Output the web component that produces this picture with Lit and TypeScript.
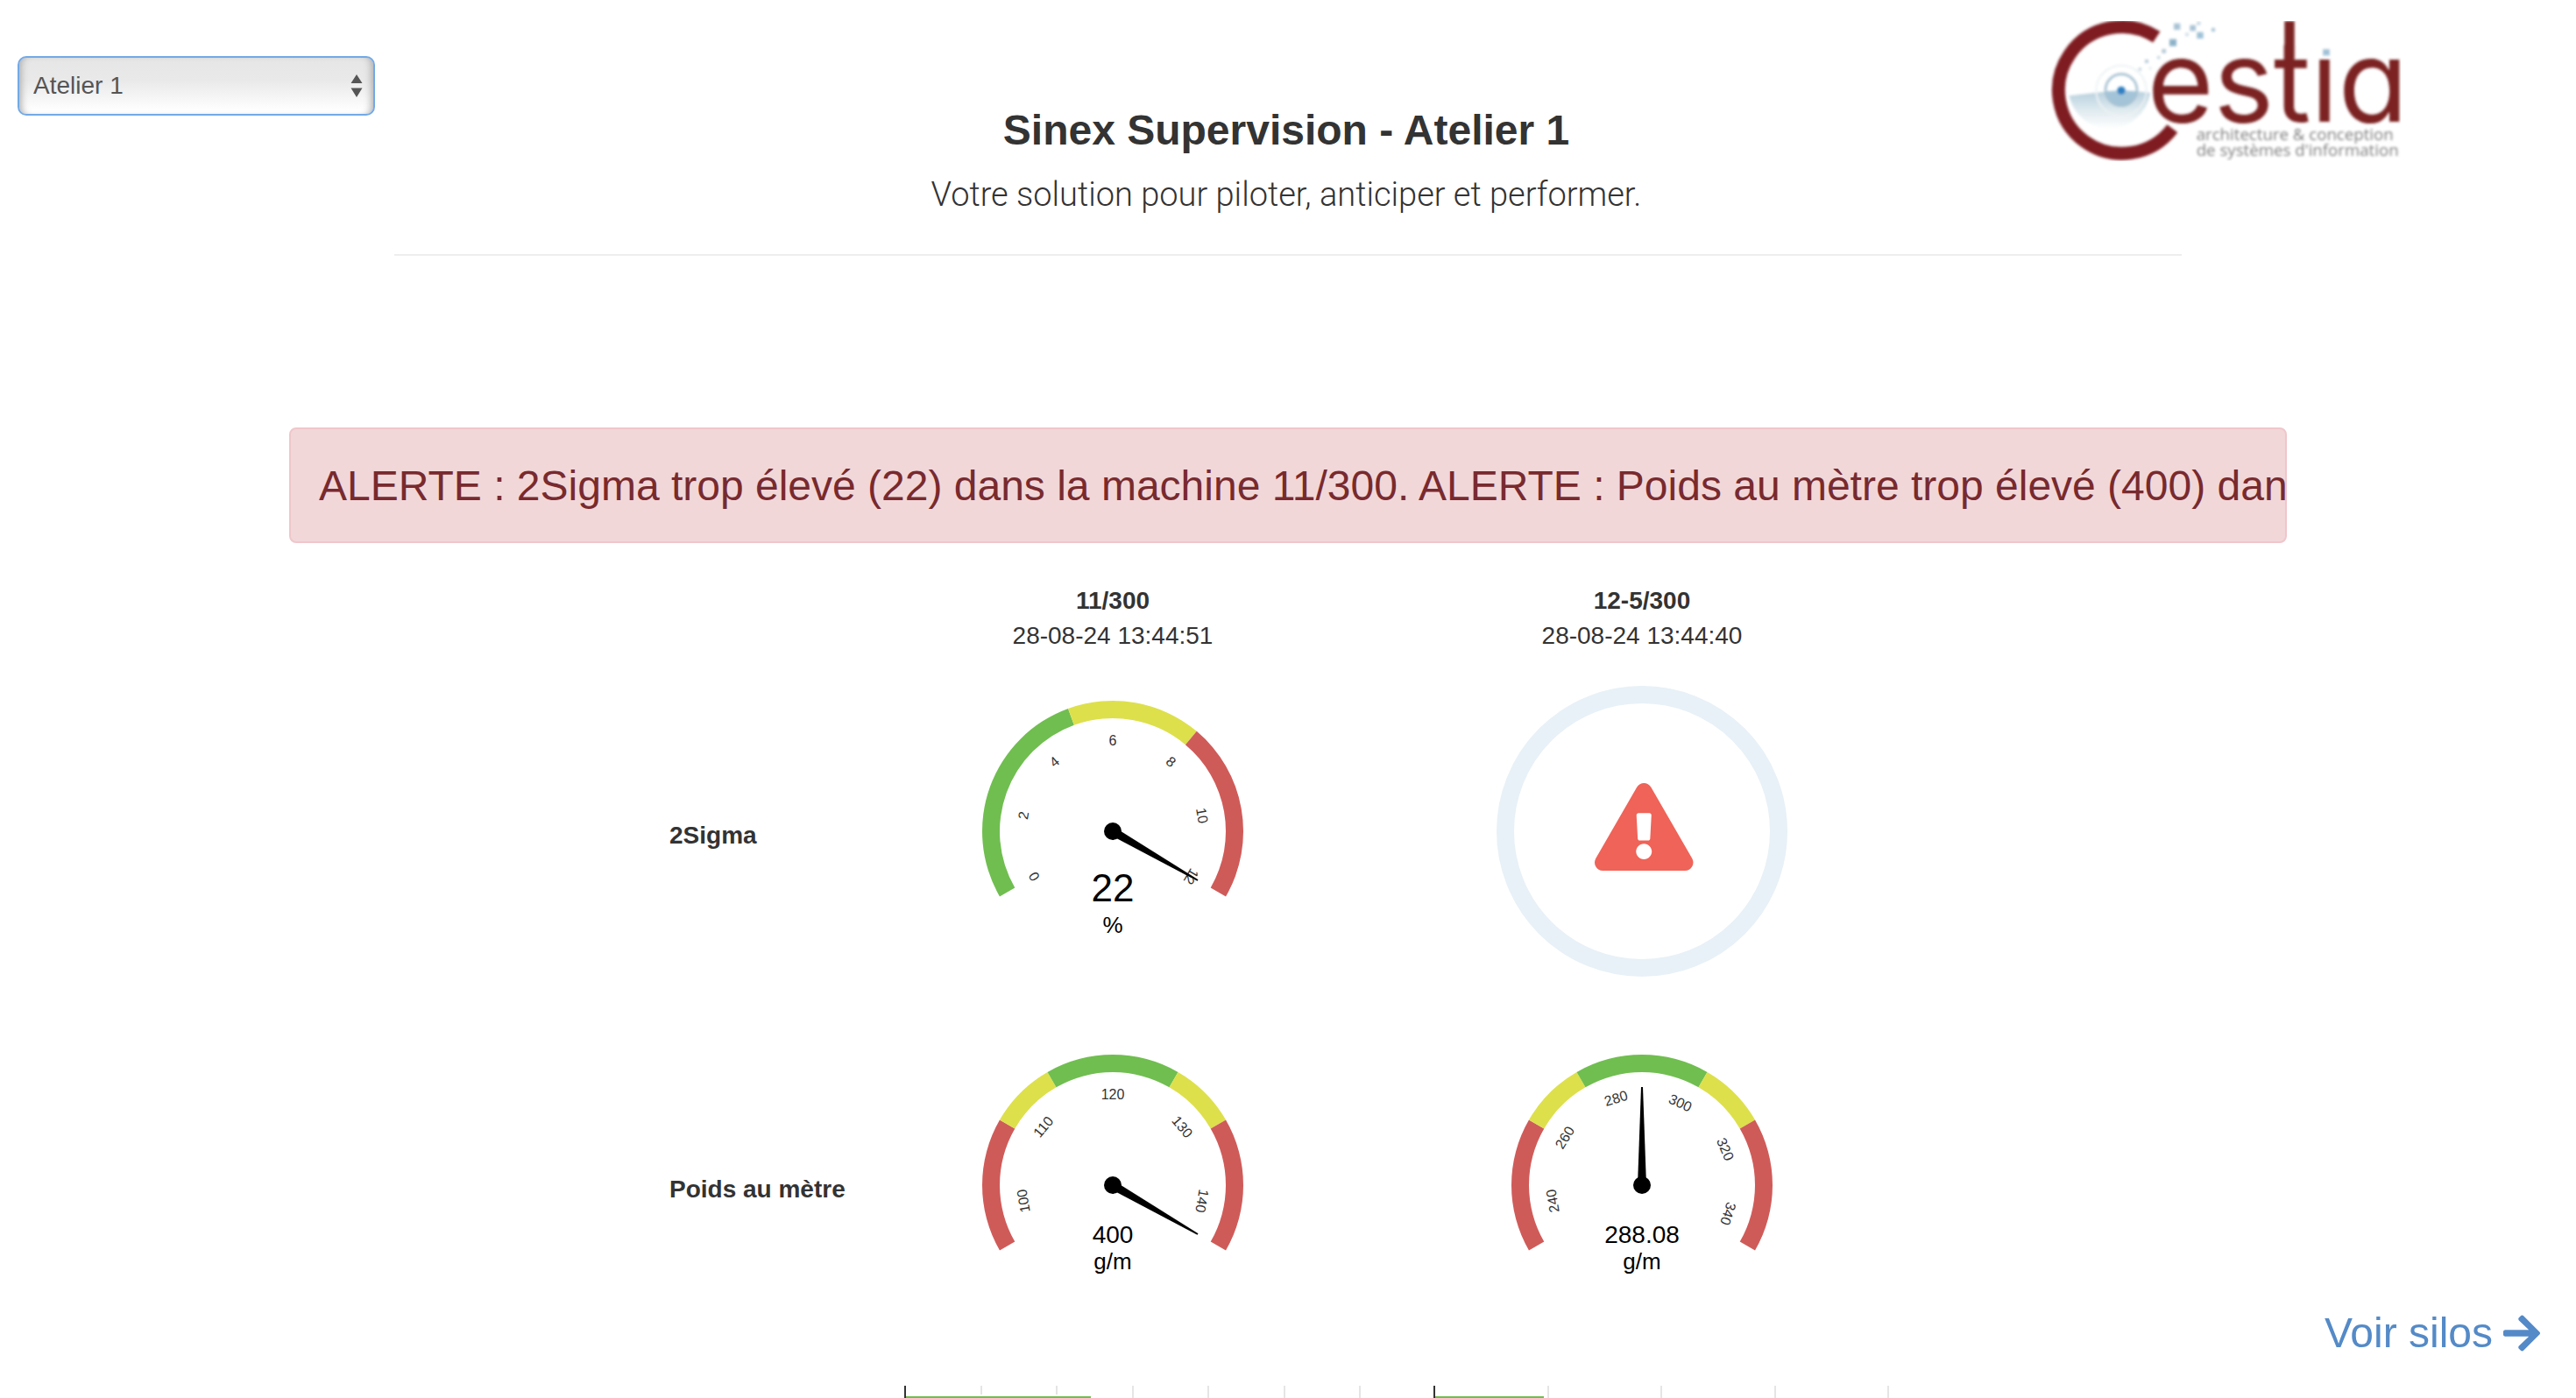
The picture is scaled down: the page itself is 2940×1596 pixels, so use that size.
import { LitElement, html, svg, css } from "lit";
import { customElement, property, state } from "lit/decorators.js";

type Zone = { from: number; to: number; color: string };
type Tick = { angle: number; label: string };

const GREEN = "#70be50";
const YELLOW = "#dde04b";
const RED = "#cf5b59";

const SWEEP = 120;
const OUTER = 149;
const INNER = 129;

function polar(radius: number, angle: number): [number, number] {
  const rad = (angle * Math.PI) / 180;
  return [radius * Math.sin(rad), -radius * Math.cos(rad)];
}

function ringSegment(zone: Zone): string {
  const [ax, ay] = polar(OUTER, zone.from);
  const [bx, by] = polar(OUTER, zone.to);
  const [cx, cy] = polar(INNER, zone.to);
  const [dx, dy] = polar(INNER, zone.from);
  return `M${ax} ${ay}A${OUTER} ${OUTER} 0 0 1 ${bx} ${by}L${cx} ${cy}A${INNER} ${INNER} 0 0 0 ${dx} ${dy}Z`;
}

@customElement("dial-gauge")
class DialGauge extends LitElement {
  @property({ attribute: false }) zones: Zone[] = [];
  @property({ attribute: false }) ticks: Tick[] = [];
  @property({ type: Number }) angle = 0;
  @property() value = "";
  @property() unit = "";
  @property({ type: Boolean }) large = false;

  static styles = css`
    :host {
      display: block;
    }
    .dial {
      display: block;
      width: 100%;
      height: 394px;
      font-family: "Liberation Sans", Arial, sans-serif;
      text-anchor: middle;
    }
    .tick {
      font-size: 16px;
      fill: #333;
    }
    .value,
    .unit {
      font-size: 28px;
      fill: #000;
    }
    .unit {
      font-size: 26px;
    }
    .value.large {
      font-size: 44px;
    }
  `;

  render() {
    return html`<svg class="dial" viewBox="-197 -197 394 394" role="img" aria-label="${this.value} ${this.unit}">
      ${this.zones.map((z) => svg`<path d=${ringSegment(z)} fill=${z.color}></path>`)}
      ${this.ticks.map(
        (t) => svg`<text class="tick" y="-98" transform="rotate(${t.angle})">${t.label}</text>`
      )}
      <g transform="rotate(${Math.min(this.angle, SWEEP)})">
        <path d="M-5 0L-1 -112H1L5 0Z"></path>
      </g>
      <circle r="10"></circle>
      <text class="value ${this.large ? "large" : ""}" y=${this.large ? 80 : 66}>${this.value}</text>
      <text class="unit" y=${this.large ? 116 : 96}>${this.unit}</text>
    </svg>`;
  }
}

@customElement("fault-dial")
class FaultDial extends LitElement {
  static styles = css`
    :host {
      display: block;
    }
    .dial {
      display: block;
      width: 100%;
      height: 394px;
    }
  `;

  render() {
    return html`<svg class="dial" viewBox="-197 -197 394 394" role="img" aria-label="Machine en défaut">
      <circle r="156" fill="none" stroke="#e8f1f7" stroke-width="20"></circle>
      <g transform="translate(-54 -55) scale(0.1953)">
        <path
          fill="#ef6358"
          d="M569.517 440.013C587.975 472.007 564.806 512 527.94 512H48.054c-36.937 0-59.999-40.055-41.577-71.987L246.423 23.985c18.467-32.009 64.72-31.951 83.154 0l239.94 416.028zM288 354c-25.405 0-46 20.595-46 46s20.595 46 46 46 46-20.595 46-46-20.595-46-46-46zm-43.673-165.346l7.418 136c.347 6.364 5.609 11.346 11.982 11.346h48.546c6.373 0 11.635-4.982 11.982-11.346l7.418-136c.375-6.874-5.098-12.654-11.982-12.654h-63.383c-6.884 0-12.356 5.78-11.981 12.654z"
        ></path>
      </g>
    </svg>`;
  }
}

@customElement("bar-strip")
class BarStrip extends LitElement {
  @property({ type: Number }) step = 86;
  @property({ type: Number }) count = 6;
  @property({ type: Number }) length = 210;

  static styles = css`
    :host {
      display: block;
    }
    .strip {
      display: block;
      width: 540px;
      height: 80px;
    }
  `;

  render() {
    const lines = Array.from({ length: this.count }, (_, i) => Math.round((i + 1) * this.step));
    return html`<svg class="strip" viewBox="0 0 540 80" aria-hidden="true">
      ${lines.map((x) => svg`<rect x=${x} width="2" height="80" fill="#e5e5e5"></rect>`)}
      <rect x="2" y="10" width=${this.length + 2} height="70" fill="#fff"></rect>
      <rect x="2" y="12" width=${this.length} height="68" fill="${GREEN}"></rect>
      <rect width="2" height="80" fill="#333"></rect>
    </svg>`;
  }
}

@customElement("cestia-logo")
class CestiaLogo extends LitElement {
  static styles = css`
    :host {
      display: block;
    }
    .logo {
      display: block;
      width: 400px;
      height: 160px;
    }
    .name {
      font-family: Inter, sans-serif;
      font-size: 390px;
      font-weight: 400;
      font-feature-settings: "cv11";
      fill: #7b2222;
    }
    .tagline {
      font-family: "Open Sans", sans-serif;
      font-size: 56px;
      fill: #808080;
    }
  `;

  render() {
    const pixels = [
      [543, 80, 22, "#a9c4d6"],
      [528, 134, 24, "#8db3c9"],
      [598, 86, 20, "#a9c4d6"],
      [622, 110, 22, "#9fc2d8"],
      [672, 96, 12, "#a9c4d6"],
      [622, 74, 12, "#c4d8e4"],
      [582, 112, 12, "#d4e2ea"],
      [502, 168, 14, "#b4c8d4"],
      [486, 192, 10, "#c4d4de"],
      [444, 204, 12, "#b9ccd8"],
      [422, 232, 10, "#c4d4de"],
      [458, 230, 8, "#dbe6ec"],
    ] as const;
    return html`<svg class="logo" viewBox="120 72 1200 480" role="img" aria-label="Cestia">
      <defs>
        <linearGradient id="lens" x1="0.5" y1="0" x2="0.5" y2="1">
          <stop offset="0" stop-color="#b4cedd"></stop>
          <stop offset="0.5" stop-color="#dde9ee"></stop>
          <stop offset="1" stop-color="#ffffff"></stop>
        </linearGradient>
        <filter id="soft" x="-5%" y="-5%" width="110%" height="110%">
          <feGaussianBlur stdDeviation="4"></feGaussianBlur>
        </filter>
      </defs>
      <g filter="url(#soft)">
        <path d="M184 328L365 308L462 318A142 148 0 0 1 184 328Z" fill="url(#lens)"></path>
        <circle cx="363" cy="310" r="86" fill="none" stroke="#edf2f4" stroke-width="6"></circle>
        <path d="M309 312A54 54 0 0 0 417 312Z" fill="#a3c4d8"></path>
        <circle cx="363" cy="308" r="54" fill="none" stroke="#a6c1d2" stroke-width="8"></circle>
        <circle cx="363" cy="310" r="14" fill="#2f7fc2"></circle>
        <path d="M484 127A217 217 0 1 0 538 440" fill="none" stroke="#7f1f20" stroke-width="45"></path>
        ${pixels.map(([x, y, s, c]) => svg`<rect x=${x} y=${y} width=${s} height=${s} fill=${c}></rect>`)}
        <text class="name" y="416"><tspan x="452">es</tspan><tspan x="884">tia</tspan></text>
        <rect x="922" y="72" width="34" height="130" fill="#7b2222"></rect>
        <rect x="1034" y="90" width="64" height="92" fill="#fff"></rect>
        <rect x="1053" y="168" width="24" height="22" fill="#9fc2d8"></rect>
        <text class="tagline" x="620" y="480">architecture &amp; conception</text>
        <text class="tagline" x="620" y="535">de systèmes d'information</text>
      </g>
    </svg>`;
  }
}

const SIGMA_ZONES: Zone[] = [
  { from: -120, to: -20, color: GREEN },
  { from: -20, to: 40, color: YELLOW },
  { from: 40, to: 120, color: RED },
];

const WEIGHT_ZONES: Zone[] = [
  { from: -120, to: -60, color: RED },
  { from: -60, to: -30, color: YELLOW },
  { from: -30, to: 30, color: GREEN },
  { from: 30, to: 60, color: YELLOW },
  { from: 60, to: 120, color: RED },
];

function makeTicks(labels: number[], min: number, max: number): Tick[] {
  return labels.map((n) => ({
    label: String(n),
    angle: ((n - min) / (max - min)) * 2 * SWEEP - SWEEP,
  }));
}

@customElement("app-root")
class AppRoot extends LitElement {
  @state() private workshop = "Atelier 1";

  static styles = css`
    :host {
      display: block;
      box-sizing: border-box;
      height: 100vh;
      overflow: hidden;
      background: #fff;
      color: #333;
      font-family: "Liberation Sans", Arial, sans-serif;
      font-size: 28px;
      line-height: 40px;
    }
    .header {
      display: grid;
      grid-template-columns: 1fr auto 1fr;
      align-items: start;
      padding: 24px 200px 0 20px;
    }
    .picker {
      display: grid;
      align-items: center;
      width: 408px;
      margin-top: 40px;
    }
    .picker > * {
      grid-area: 1 / 1;
    }
    .select {
      appearance: none;
      box-sizing: border-box;
      width: 100%;
      height: 68px;
      padding: 0 40px 0 16px;
      border: 2px solid #72a9e6;
      border-radius: 10px;
      background: linear-gradient(#e6e6e6, #e9e9e9 40%, #fff 95%);
      box-shadow: inset 8px 0 8px -6px #aaa, inset -8px 0 8px -6px #aaa;
      color: #555;
      font: inherit;
    }
    .chevrons {
      justify-self: end;
      width: 14px;
      height: 26px;
      margin-right: 14px;
      pointer-events: none;
    }
    .heading {
      margin-left: 176px;
      padding-top: 97px;
      text-align: center;
    }
    .title {
      margin: 0;
      font-size: 48px;
      line-height: 56px;
    }
    .subtitle {
      margin: 15px 0 0;
      font-family: Roboto, sans-serif;
      font-size: 38px;
      font-weight: 300;
      line-height: 60px;
    }
    .brand {
      justify-self: end;
    }
    .rule {
      width: min(2040px, 100%);
      height: 2px;
      margin: 38px auto 0;
      border: 0;
      background: #eee;
    }
    .alert {
      box-sizing: border-box;
      width: min(2280px, 100%);
      margin: 196px auto 0;
      padding: 37px 0 35px 32px;
      overflow: hidden;
      border: 2px solid #efc6cb;
      border-radius: 8px;
      background: #f2d7d9;
      color: #782a2e;
      font-size: 48px;
      line-height: 56px;
      white-space: nowrap;
    }
    .machines {
      width: min(1412px, 100%);
      margin: 46px auto 0;
      border-collapse: collapse;
      table-layout: fixed;
    }
    .labels {
      width: 204px;
    }
    .machines th,
    .machines td {
      padding: 0;
    }
    .machines .machine {
      padding-bottom: 6px;
      font-weight: 400;
      text-align: center;
    }
    .name {
      display: block;
      font-weight: 700;
    }
    .measure {
      text-align: left;
      white-space: nowrap;
    }
    .machines .cell {
      padding-bottom: 10px;
      vertical-align: top;
    }
    .machines .chart {
      padding: 22px 0 0 64px;
    }
    .silos {
      position: fixed;
      right: 41px;
      bottom: 46px;
      display: flex;
      align-items: center;
      gap: 12px;
      color: #548ac7;
      font-size: 48px;
      line-height: 56px;
      text-decoration: none;
    }
    .arrow {
      width: 42px;
      height: 48px;
    }
  `;

  private onPick(event: Event) {
    this.workshop = (event.target as HTMLSelectElement).value;
  }

  render() {
    return html`
      <header class="header">
        <div class="picker">
          <select class="select" aria-label="Atelier" @change=${this.onPick}>
            <option>Atelier 1</option>
            <option>Atelier 2</option>
          </select>
          <svg class="chevrons" viewBox="0 0 14 26" fill="#555" aria-hidden="true">
            <path d="M7 0L13.500 10H0.500ZM7 26L13.500 15.500H0.500Z"></path>
          </svg>
        </div>
        <div class="heading">
          <h1 class="title">Sinex Supervision - ${this.workshop}</h1>
          <p class="subtitle">Votre solution pour piloter, anticiper et performer.</p>
        </div>
        <cestia-logo class="brand"></cestia-logo>
      </header>
      <hr class="rule" />
      <div class="alert" role="alert">
        ALERTE : 2Sigma trop élevé (22) dans la machine 11/300. ALERTE : Poids au mètre trop élevé (400) dans la
        machine 11/300.
      </div>
      <table class="machines">
        <colgroup>
          <col class="labels" />
          <col />
          <col />
        </colgroup>
        <thead>
          <tr>
            <td></td>
            <th class="machine" scope="col"><span class="name">11/300</span>28-08-24 13:44:51</th>
            <th class="machine" scope="col"><span class="name">12-5/300</span>28-08-24 13:44:40</th>
          </tr>
        </thead>
        <tbody>
          <tr>
            <th class="measure" scope="row">2Sigma</th>
            <td class="cell">
              <dial-gauge
                large
                .zones=${SIGMA_ZONES}
                .ticks=${makeTicks([0, 2, 4, 6, 8, 10, 12], 0, 12)}
                .angle=${120}
                value="22"
                unit="%"
              ></dial-gauge>
            </td>
            <td class="cell"><fault-dial></fault-dial></td>
          </tr>
          <tr>
            <th class="measure" scope="row">Poids au mètre</th>
            <td class="cell">
              <dial-gauge
                .zones=${WEIGHT_ZONES}
                .ticks=${makeTicks([100, 110, 120, 130, 140], 96, 144)}
                .angle=${120}
                value="400"
                unit="g/m"
              ></dial-gauge>
            </td>
            <td class="cell">
              <dial-gauge
                .zones=${WEIGHT_ZONES}
                .ticks=${makeTicks([240, 260, 280, 300, 320, 340], 230.4, 345.6)}
                .angle=${0}
                value="288.08"
                unit="g/m"
              ></dial-gauge>
            </td>
          </tr>
          <tr>
            <td></td>
            <td class="chart"><bar-strip .step=${86.5} .count=${6} .length=${211}></bar-strip></td>
            <td class="chart"><bar-strip .step=${129.5} .count=${4} .length=${124}></bar-strip></td>
          </tr>
        </tbody>
      </table>
      <a class="silos" href="#silos"
        >Voir silos
        <svg class="arrow" viewBox="0 0 448 512" fill="currentColor" aria-hidden="true">
          <path
            d="M190.500 66.900l22.200-22.200c9.400-9.400 24.600-9.400 33.900 0L441 239c9.400 9.400 9.400 24.600 0 33.900L246.600 467.300c-9.400 9.400-24.600 9.400-33.900 0l-22.200-22.200c-9.500-9.500-9.300-25 .4-34.300L311.400 296H24c-13.300 0-24-10.700-24-24v-32c0-13.300 10.700-24 24-24h287.400L190.900 101.200c-9.800-9.300-10-24.800-.4-34.300z"
          ></path>
        </svg>
      </a>
    `;
  }
}
